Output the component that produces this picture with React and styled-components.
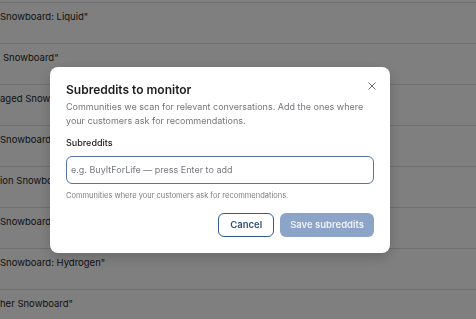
import React, { useState } from "react";
import styled, { createGlobalStyle } from "styled-components";

const GlobalStyle = createGlobalStyle`
  html, body {
    margin: 0;
    padding: 0;
    width: 100%;
    height: 100%;
    overflow: hidden;
    background: #ffffff;
    font-family: Inter, "Noto Sans", "Liberation Sans", sans-serif;
  }
  * {
    box-sizing: border-box;
  }
`;

const rows = [
  { text: "Snowboard: Liquid\"", indent: 0 },
  { text: "Snowboard\"", indent: 3 },
  { text: "aged Snowboard\"", indent: 0 },
  { text: "Snowboard: Oxygen\"", indent: 0 },
  { text: "ion Snowboard\"", indent: 0 },
  { text: "Snowboard\"", indent: 0 },
  { text: "Snowboard: Hydrogen\"", indent: 0 },
  { text: "her Snowboard\"", indent: 0 },
];

const SubredditsModal = () => {
  const [value, setValue] = useState("");

  return (
    <>
      <GlobalStyle />
      <Page>
        <List>
          {rows.map((row, i) => (
            <Row key={i}>
              <RowText $indent={row.indent}>{row.text}</RowText>
            </Row>
          ))}
        </List>
      </Page>
      <Overlay>
        <Dialog>
          <Header>
            <Title>Subreddits to monitor</Title>
            <CloseButton aria-label="Close">
              <svg width="8" height="8" viewBox="0 0 10 10">
                <path d="M1 1 L9 9 M9 1 L1 9" stroke="#666" strokeWidth="1.2" strokeLinecap="round" />
              </svg>
            </CloseButton>
          </Header>
          <Description>
            Communities we scan for relevant conversations. Add the ones where
            your customers ask for recommendations.
          </Description>
          <Label>Subreddits</Label>
          <Input
            value={value}
            onChange={(e) => setValue(e.target.value)}
            placeholder="e.g. BuyItForLife — press Enter to add"
          />
          <Hint>Communities where your customers ask for recommendations.</Hint>
          <Footer>
            <CancelButton>Cancel</CancelButton>
            <SaveButton disabled>Save subreddits</SaveButton>
          </Footer>
        </Dialog>
      </Overlay>
    </>
  );
};

const Page = styled.div`
  width: 100%;
  height: 100%;
  padding-top: 2px;
`;

const List = styled.div`
  display: flex;
  flex-direction: column;
`;

const Row = styled.div`
  height: 41px;
  border-top: 1px solid #dedede;
  padding-top: 8px;
`;

const RowText = styled.span`
  display: block;
  padding-left: ${(p) => p.$indent}px;
  font-size: 9.5px;
  line-height: 12px;
  color: #1e1e1e;
  white-space: nowrap;
`;

const Overlay = styled.div`
  position: fixed;
  inset: 0;
  background: rgba(0, 0, 0, 0.5);
  display: flex;
  align-items: center;
  justify-content: center;
  padding-right: 36px;
`;

const Dialog = styled.div`
  width: 340px;
  background: #ffffff;
  border-radius: 8px;
  padding: 16px 16px 16px;
  display: flex;
  flex-direction: column;
  box-shadow: 0 4px 14px rgba(0, 0, 0, 0.18);
`;

const Header = styled.div`
  display: flex;
  align-items: center;
  justify-content: space-between;
`;

const Title = styled.h2`
  margin: 0;
  font-size: 12px;
  line-height: 14px;
  font-weight: 600;
  color: #1c1c1c;
`;

const CloseButton = styled.button`
  border: none;
  background: none;
  padding: 0;
  width: 12px;
  height: 12px;
  display: flex;
  align-items: center;
  justify-content: center;
  cursor: pointer;
  margin-right: -4px;
  margin-top: -8px;
`;

const Description = styled.p`
  margin: 3px 0 0;
  font-size: 9px;
  line-height: 14px;
  color: #73767c;
`;

const Label = styled.label`
  margin-top: 9px;
  font-size: 9px;
  line-height: 12px;
  font-weight: 500;
  color: #1c1c1c;
`;

const Input = styled.input`
  margin-top: 7px;
  height: 28px;
  width: 100%;
  border: 1.5px solid #5776a6;
  border-radius: 6px;
  padding: 0 4px;
  font-family: inherit;
  font-size: 9px;
  color: #1c1c1c;
  outline: none;
  caret-color: #111;

  &::placeholder {
    color: #75787e;
  }
`;

const Hint = styled.p`
  margin: 7px 0 0;
  font-size: 7.5px;
  line-height: 10px;
  color: #7b7e84;
`;

const Footer = styled.div`
  margin-top: 12px;
  display: flex;
  justify-content: flex-end;
  gap: 6px;
`;

const CancelButton = styled.button`
  height: 24px;
  padding: 0 11px;
  border: 1.5px solid #34598d;
  border-radius: 6px;
  background: #ffffff;
  color: #2f4f7e;
  font-family: inherit;
  font-size: 9.5px;
  font-weight: 600;
  cursor: pointer;
`;

const SaveButton = styled.button`
  height: 24px;
  padding: 0 10px;
  border: none;
  border-radius: 6px;
  background: #8ba4c7;
  color: #eef2f8;
  font-family: inherit;
  font-size: 9.5px;
  font-weight: 600;
  cursor: not-allowed;
`;

export default SubredditsModal;
